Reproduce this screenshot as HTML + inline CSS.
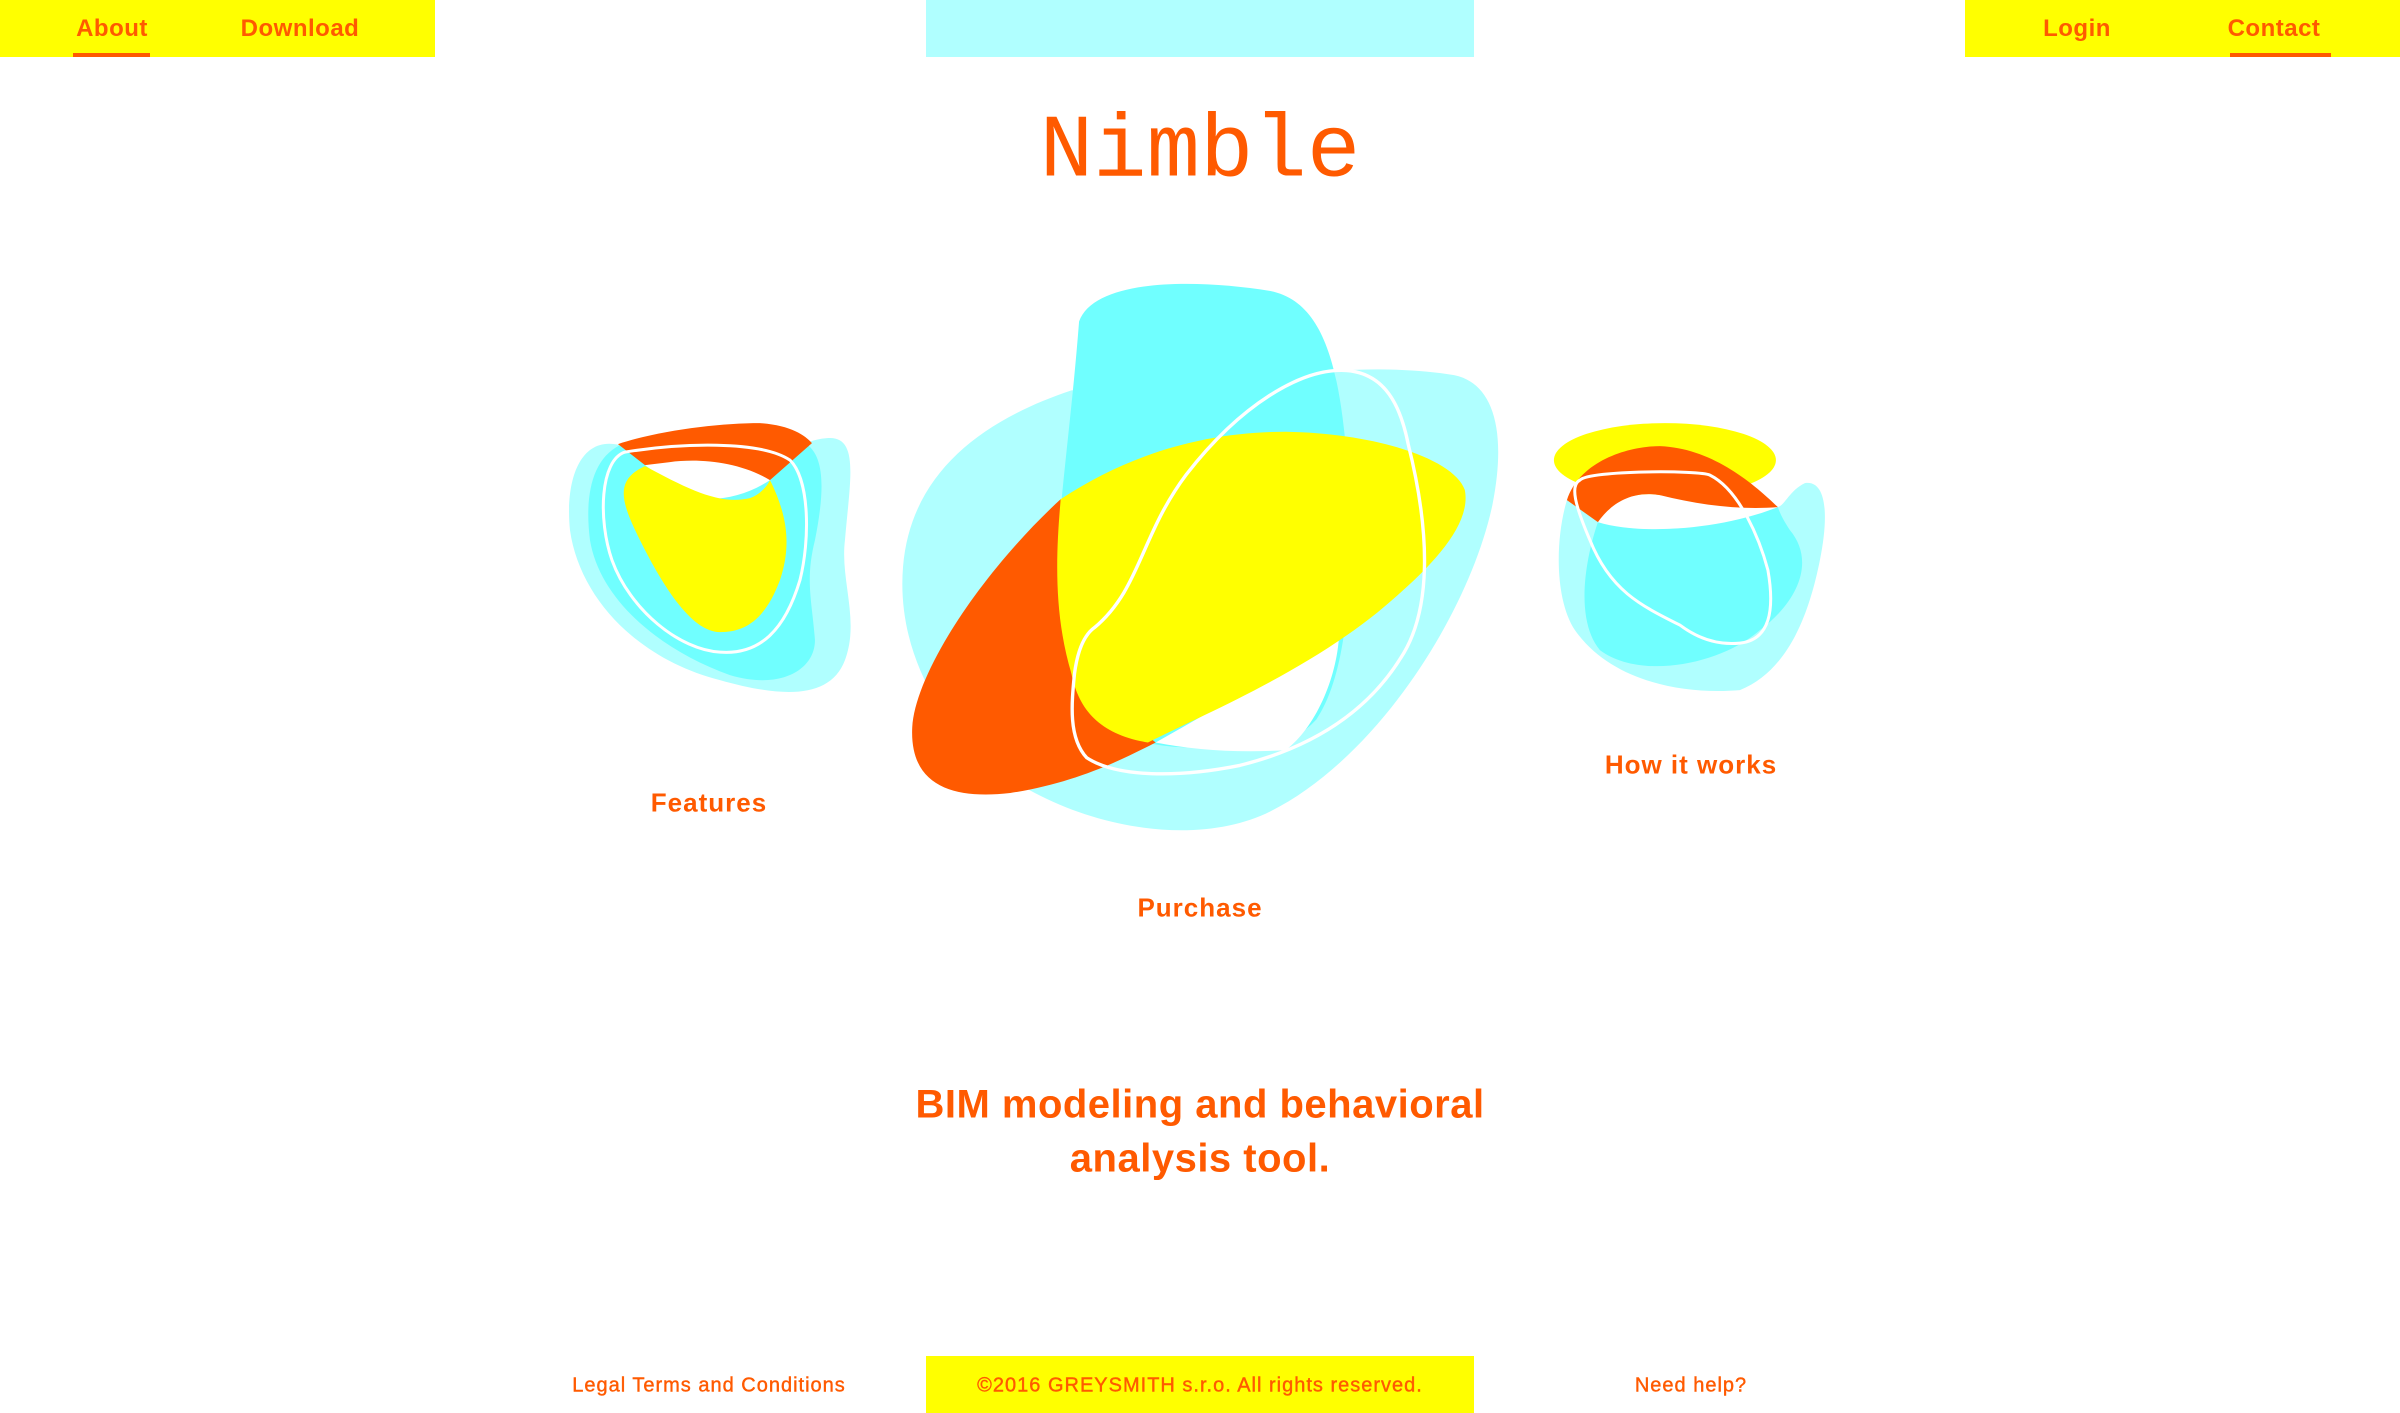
<!DOCTYPE html>
<html><head><meta charset="utf-8"><style>
body{margin:0;width:2400px;height:1413px;position:relative;overflow:hidden;background:#fff;font-family:"Liberation Sans",sans-serif;font-weight:bold;color:#ff5a00}
.a{position:absolute}
.t{position:absolute;transform:translate(-50%,-50%);white-space:nowrap;letter-spacing:1px}
</style></head><body>
<div class="a" style="left:0;top:0;width:435px;height:57px;background:#ffff00"></div>
<div class="a" style="left:926px;top:0;width:548px;height:57px;background:#b0ffff"></div>
<div class="a" style="left:1965px;top:0;width:435px;height:57px;background:#ffff00"></div>
<div class="a" style="left:73px;top:53px;width:77px;height:4px;background:#ff5a00"></div>
<div class="a" style="left:2230px;top:53px;width:101px;height:4px;background:#ff5a00"></div>
<div class="t" style="left:112px;top:29px;font-size:24px;letter-spacing:0.5px">About</div>
<div class="t" style="left:300px;top:29px;font-size:24px;letter-spacing:0.5px">Download</div>
<div class="t" style="left:2077px;top:29px;font-size:24px;letter-spacing:0.5px">Login</div>
<div class="t" style="left:2274px;top:29px;font-size:24px;letter-spacing:0.5px">Contact</div>
<div class="t" style="left:1200px;top:152px;font-family:'Liberation Mono',monospace;font-weight:normal;font-size:89px;letter-spacing:0">Nimble</div>

<svg class="a" style="left:0;top:0" width="2400" height="1413" viewBox="0 0 1568 923">
<g>
<path fill="#b0ffff" d="M700,255 C640,275 595,310 590,370 C585,430 620,490 680,520 C730,545 790,550 830,530 C900,495 960,400 975,330 C985,280 975,250 950,245 C920,240 880,240 850,245 Z"/>
<path fill="#70ffff" d="M705,210 C715,182 780,182 830,190 C865,197 875,240 880,300 C885,380 880,440 860,470 C840,492 810,490 770,488 C720,485 700,460 692,420 C685,370 698,300 705,210 Z"/>
<path fill="#fff" d="M755,485 C800,460 850,430 875,410 C875,440 860,475 840,490 C810,492 780,490 755,485 Z"/>
<path fill="#ff5a00" d="M693,326 C640,375 598,440 596,475 C594,515 625,522 660,518 C700,512 730,498 755,485 L700,440 Z"/>
<path fill="#ffff00" d="M693,326 C740,295 790,282 840,282 C900,283 950,300 957,320 C962,345 930,375 900,400 C850,440 790,465 750,485 C720,480 705,465 700,440 C688,400 690,360 693,326 Z"/>
<path fill="none" stroke="#fff" stroke-width="2.2" d="M715,410 C745,385 745,350 775,310 C810,265 850,240 880,242 C905,244 915,265 920,290 C935,350 935,400 915,430 C890,470 850,490 810,500 C770,508 730,508 710,495 C698,482 700,460 702,440 C704,425 708,415 715,410 Z"/>
</g>
<g transform="scale(0.6533)">
<path fill="#b0ffff" d="M620,445 C580,435 565,480 570,530 C580,600 640,660 720,680 C780,697 830,700 845,660 C860,620 840,580 845,540 C850,480 860,435 827,438 C800,440 790,455 780,460 Z"/>
<path fill="#70ffff" d="M620,445 C590,460 585,500 590,540 C600,600 660,650 730,675 C780,690 815,670 815,640 C812,600 805,580 815,540 C825,490 825,455 805,443 Z"/>
<path fill="#fff" d="M645,465 C700,455 750,462 770,480 C740,500 700,505 680,490 Z"/>
<path fill="#ff5a00" d="M618,444 C660,430 720,423 760,423 C790,425 805,435 812,443 L770,480 C740,462 700,458 670,462 L645,465 Z"/>
<path fill="#ffff00" d="M645,466 C690,490 720,505 750,498 C760,495 768,485 770,480 C790,520 790,550 780,580 C765,620 745,632 720,632 C690,632 660,580 640,540 C620,500 615,480 645,466 Z"/>
<path fill="none" stroke="#fff" stroke-width="3" d="M625,452 C680,443 760,440 790,460 C810,480 810,540 800,580 C785,630 760,655 720,652 C680,650 630,610 612,560 C598,520 600,460 625,452 Z"/>
<ellipse cx="1665" cy="460" rx="111" ry="37" fill="#ffff00"/>
<path fill="#b0ffff" d="M1567,500 C1555,540 1555,600 1575,630 C1610,680 1680,695 1740,690 C1790,670 1810,610 1820,560 C1830,510 1825,480 1805,483 C1790,490 1785,505 1778,507 C1700,520 1650,530 1600,522 Z"/>
<path fill="#70ffff" d="M1598,522 C1585,560 1575,620 1600,650 C1640,680 1720,665 1760,630 C1800,600 1815,560 1790,530 C1780,515 1778,507 1778,507 C1700,530 1650,535 1598,522 Z"/>
<path fill="#fff" d="M1598,522 C1610,505 1630,490 1660,495 C1700,500 1740,510 1778,507 C1720,530 1640,535 1598,522 Z"/>
<path fill="#ff5a00" d="M1567,500 C1580,460 1630,446 1660,446 C1710,448 1750,480 1778,507 C1740,510 1700,505 1660,495 C1630,490 1610,505 1598,522 Z"/>
<path fill="none" stroke="#fff" stroke-width="3" d="M1580,480 C1590,470 1700,470 1710,475 C1740,490 1760,540 1768,570 C1775,610 1770,640 1740,643 C1720,645 1700,640 1680,625 C1640,605 1610,590 1590,540 C1575,505 1570,485 1580,480 Z"/>
</g>
</svg>

<div class="t" style="left:709px;top:803px;font-size:26px">Features</div>
<div class="t" style="left:1200px;top:908px;font-size:26px">Purchase</div>
<div class="t" style="left:1691px;top:765px;font-size:26px">How it works</div>
<div class="t" style="left:1200px;top:1105px;font-size:40px;letter-spacing:0.5px">BIM modeling and behavioral</div>
<div class="t" style="left:1200px;top:1159px;font-size:40px;letter-spacing:0.5px">analysis tool.</div>
<div class="a" style="left:926px;top:1356px;width:548px;height:57px;background:#ffff00"></div>
<div class="t" style="left:1200px;top:1386px;font-size:20px;font-weight:normal;-webkit-text-stroke:0.4px #ff5a00">©2016 GREYSMITH s.r.o. All rights reserved.</div>
<div class="t" style="left:709px;top:1386px;font-size:20px;font-weight:normal;-webkit-text-stroke:0.4px #ff5a00">Legal Terms and Conditions</div>
<div class="t" style="left:1691px;top:1386px;font-size:20px;font-weight:normal;-webkit-text-stroke:0.4px #ff5a00">Need help?</div>
</body></html>
